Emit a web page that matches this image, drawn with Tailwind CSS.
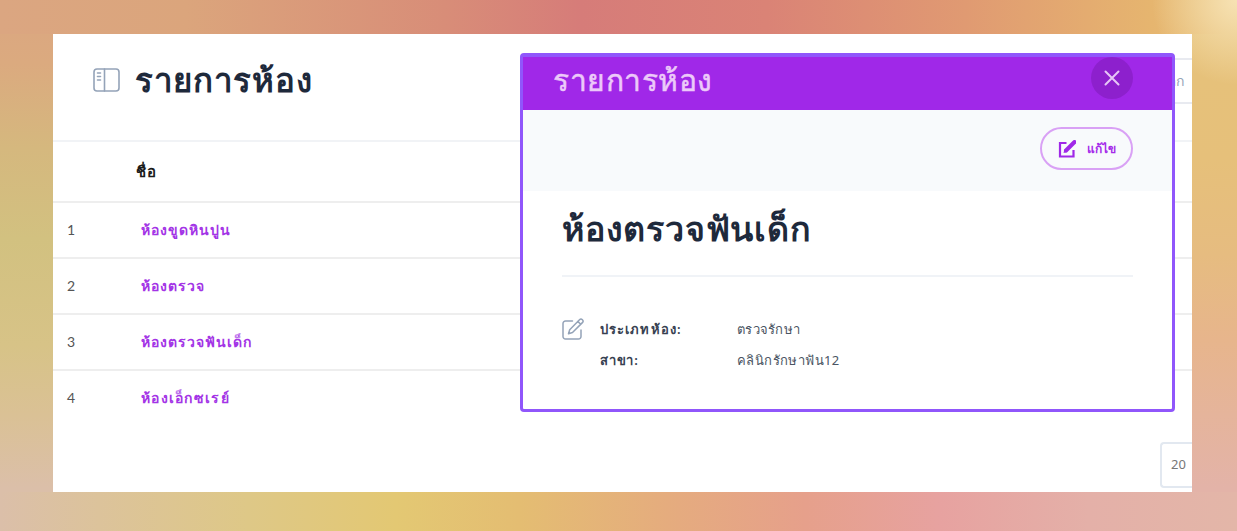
<!DOCTYPE html>
<html lang="th">
<head>
  <meta charset="UTF-8">
  <meta name="viewport" content="width=device-width, initial-scale=1.0">
  <title>รายการห้อง</title>
  <script src="https://cdn.jsdelivr.net/npm/@tailwindcss/browser@4"></script>
</head>
<body class="relative h-[531px] w-[1237px] overflow-hidden pt-[34px] pl-[53px] font-['Noto_Sans',sans-serif] bg-[radial-gradient(circle_at_1237px_0,#f7e2b4,#f7e2b400_85px),linear-gradient(90deg,#dba681,#dba57c_15%,#d88d78_36%,#d67c79_47%,#da8376_62%,#e09a72_78%,#e6b56f_93%,#e6c27a),linear-gradient(90deg,#dbbfa9,#dcc39b_8%,#dec887_20%,#e3c873_32%,#e4bd72_42%,#e5ac7e_54%,#e6a08b_65%,#e7a2a0_76%,#e4b0a8_88%,#e3b6a8),linear-gradient(180deg,#dba681,#dbaa7f_12%,#d5b87e_28%,#d2c180_45%,#d7c387_65%,#dac195_78%,#dbbfa9_92%),linear-gradient(180deg,#e6c27a,#e6c07a_30%,#e6bc80_48%,#e7b58c_64%,#e5b49b_78%,#e3b3a8_92%)] bg-[length:100%_100%,100%_34px,100%_39px,53px_100%,46px_100%] bg-[position:top,top,bottom,left,right] bg-no-repeat">

  <!-- Room list -->
  <main class="relative h-[458px] w-[1139px] overflow-hidden bg-white">
    <header class="flex h-[108px] items-start justify-between border-b-2 border-[#f1f3f6] pl-10">
      <div class="flex items-center gap-[15px] pt-6">
        <svg class="h-6 w-[27px]" viewBox="0 0 27 24" fill="none" stroke="#94a3b8" stroke-width="1.6" stroke-linecap="round">
          <rect x="1" y="1" width="25" height="22" rx="3" />
          <path d="M11.500 1v22M4.500 5h3M4.500 8.500h3M4.500 12h3" />
        </svg>
        <h1 class="text-[33px] leading-[44px] font-bold tracking-[0.7px] text-[#1e293b]">รายการห้อง</h1>
      </div>
      <div class="mt-6 flex h-[46px] w-20 items-center justify-end border-y-2 border-[#e8eaf0] pr-2 text-sm text-[#94a3b8]">เด็ก</div>
    </header>

    <div class="flex h-[61px] items-center border-b-2 border-[#eeeeee] pl-[83px] text-[15px] font-semibold tracking-[0.5px] text-[#1b1b1b]">ชื่อ</div>

    <ul class="text-sm font-semibold tracking-[1px] text-[#a334e6]">
      <li class="flex h-14 items-center border-b-2 border-[#eeeeee] pl-[14px]"><span class="w-[74px] font-['Lato'] font-normal text-[#555]">1</span>ห้องขูดหินปูน</li>
      <li class="flex h-14 items-center border-b-2 border-[#eeeeee] pl-[14px]"><span class="w-[74px] font-['Lato'] font-normal text-[#555]">2</span>ห้องตรวจ</li>
      <li class="flex h-14 items-center border-b-2 border-[#eeeeee] pl-[14px]"><span class="w-[74px] font-['Lato'] font-normal text-[#555]">3</span>ห้องตรวจฟันเด็ก</li>
      <li class="flex h-[54px] items-center pl-[14px] tracking-[1.3px]"><span class="w-[74px] font-['Lato'] font-normal text-[#555]">4</span>ห้องเอ็กซเรย์</li>
    </ul>

    <div class="mt-[17px] ml-auto flex h-[46px] w-8 items-center rounded-l border-2 border-r-0 border-[#e2e8f0] pl-[9px] text-[13px] text-[#777]">20</div>
  </main>

  <!-- Room detail dialog -->
  <section class="absolute top-[53px] left-[520px] h-[359px] w-[655px] rounded border-3 border-t-4 border-[#9056fb] bg-white">
    <header class="flex h-[53px] items-start justify-between bg-[#a028e8] pr-[39px] pl-[30px]">
      <h2 class="text-[30px] leading-[46px] font-medium tracking-[0.5px] text-[#ecc9f9] [-webkit-text-stroke:0.5px_#ecc9f9]">รายการห้อง</h2>
      <button class="flex size-[42px] items-center justify-center rounded-full bg-[#8d20cd]">
        <svg class="size-4" viewBox="0 0 16 16" fill="none" stroke="#e6c6f6" stroke-width="2" stroke-linecap="round">
          <path d="M1.500 1.500l13 13M14.500 1.500l-13 13" />
        </svg>
      </button>
    </header>
    <div class="flex h-[81px] items-start justify-end bg-[#f8fafc] pt-[17px] pr-[39px]">
      <button class="flex h-[43px] w-[93px] items-center gap-[11px] rounded-full border-2 border-[#d9a1f5] pl-4 text-[12px] font-bold text-[#a52aea]">
        <svg class="size-[18px]" viewBox="0 0 18 18" fill="none" stroke="#a028e8" stroke-width="2.200">
          <path d="M8.500 3H2v13.500h13.500V10" />
          <path d="M8 10.500l8.500-8.500" stroke-width="4" stroke-linecap="round" />
          <path d="M5.500 13l1-4 3 3z" fill="#a028e8" stroke="none" />
        </svg>
        แก้ไข
      </button>
    </div>
    <div class="mr-[39px] ml-[39px]">
      <h3 class="h-[86px] border-b-2 border-[#f0f3f7] pt-3 text-[34px] leading-[50px] font-semibold tracking-[0.8px] text-[#1e293b]">ห้องตรวจฟันเด็ก</h3>
      <div class="mt-[37px] flex text-[13px] leading-[31px] text-[#4b5563]">
        <svg class="mt-1 mr-4 size-[22px]" viewBox="0 0 22 22" fill="none" stroke="#94a3b8" stroke-width="1.500" stroke-linejoin="round" stroke-linecap="round">
          <path d="M10.500 3H3.500A2.500 2.500 0 0 0 1 5.500v13A2.500 2.500 0 0 0 3.500 21h13a2.500 2.500 0 0 0 2.500-2.500V12" />
          <path d="M17.500 1.700a2 2 0 0 1 2.900 2.900L10.500 14.500l-4 1.200 1.200-4zM15.800 3.400l2.900 2.900" />
        </svg>
        <dl class="grid grid-cols-[137px_auto]">
          <dt class="font-semibold tracking-[1.1px] text-[#374151]">ประเภทห้อง:</dt><dd class="tracking-[0.3px]">ตรวจรักษา</dd>
          <dt class="font-semibold tracking-[0.8px] text-[#374151]">สาขา:</dt><dd class="tracking-[0.4px]">คลินิกรักษาฟัน12</dd>
        </dl>
      </div>
    </div>
  </section>

</body>
</html>
